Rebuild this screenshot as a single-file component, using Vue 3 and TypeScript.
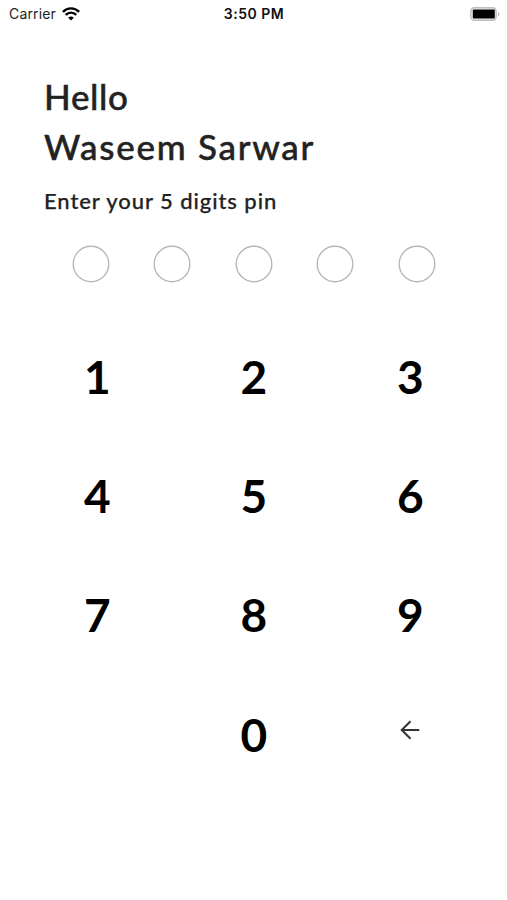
<script setup lang="ts">
const keys: string[] = ['1', '2', '3', '4', '5', '6', '7', '8', '9', '', '0', 'back']
</script>

<template>
  <main class="screen">
    <header class="status">
      <div class="carrier">
        <span>Carrier</span>
        <svg width="18" height="14" viewBox="0 0 18 14" fill="none" stroke="#000" stroke-width="2.4">
          <path d="M.9 4.9C5.5.2 12.5.2 17.1 4.9M3.7 7.9C6.8 4.8 11.2 4.8 14.3 7.9" />
          <path d="M9 13.5L6.2 10.7Q9 8.2 11.8 10.7Z" fill="#000" stroke="none" />
        </svg>
      </div>
      <span class="time">3:50 PM</span>
      <svg class="battery" width="31" height="14" viewBox="0 0 31 14">
        <rect x=".8" y=".8" width="25.4" height="12.4" rx="3.6" fill="#eee" stroke="#bdbdbd" stroke-width="1.4" />
        <rect x="2.8" y="2.5" width="22" height="9" rx="1" />
        <path d="M28 4.5q3 2.5 0 5z" fill="#bbb" />
      </svg>
    </header>
    <section class="intro">
      <h1><span class="line hello">Hello</span><span class="line name">Waseem Sarwar</span></h1>
      <p><span>Enter your 5 digits pin</span></p>
    </section>
    <div class="pins">
      <svg v-for="n in 5" :key="n" class="pin" viewBox="0 0 38 38"><circle cx="19" cy="19" r="17.8" /></svg>
    </div>
    <section class="pad">
      <div v-for="key in keys" :key="key" class="cell">
        <button v-if="key === 'back'" class="key back" aria-label="Delete">
          <svg width="20" height="20" viewBox="0 0 20 20" fill="none" stroke="#333" stroke-width="2">
            <path d="M19.3 10H2M10.5 1.2L1.7 10L10.5 18.8" />
          </svg>
        </button>
        <button v-else-if="key" class="key">{{ key }}</button>
      </div>
    </section>
  </main>
</template>

<style>
body { margin: 0; background: #fff; }
</style>
<style scoped>
.screen { width: 507px; height: 900px; overflow: hidden; background: #fff; color: #222; font-family: Lato, sans-serif; }
.status { height: 27px; box-sizing: border-box; padding: 0 6px 0 9px; display: grid; grid-template-columns: 1fr auto 1fr; align-items: center; font: 14px Inter, sans-serif; color: #222; }
.carrier { display: flex; align-items: center; gap: 6px; letter-spacing: .15px; }
.time { font-weight: 600; color: #111; letter-spacing: .5px; margin-right: 2px; }
.battery { justify-self: end; }
.intro { padding: 44px 44px 0; }
h1 { margin: 0; font: 500 35px/50px Lato, sans-serif; -webkit-text-stroke: .45px #222; }
.line { display: block; }
.hello { letter-spacing: .65px; }
.name { letter-spacing: 1.72px; }
p { margin: 17px 0 0; font: 500 22px/26px Lato, sans-serif; letter-spacing: .93px; -webkit-text-stroke: .25px #222; }
.pins { display: flex; justify-content: space-between; padding: 0 71px 0 71.5px; margin-top: 31px; }
.pin { width: 38px; height: 38px; fill: none; stroke: #b8b8b8; stroke-width: 1.4; }
.pad { display: grid; grid-template-columns: repeat(3, 156.5px); grid-auto-rows: 119.3px; margin: 34px 0 0 19px; }
.cell { display: grid; place-items: center; }
.key { border: 0; background: none; padding: 0; color: #000; font: 700 46px/54px Lato, sans-serif; }
.back { display: flex; margin-bottom: 9px; }
</style>
